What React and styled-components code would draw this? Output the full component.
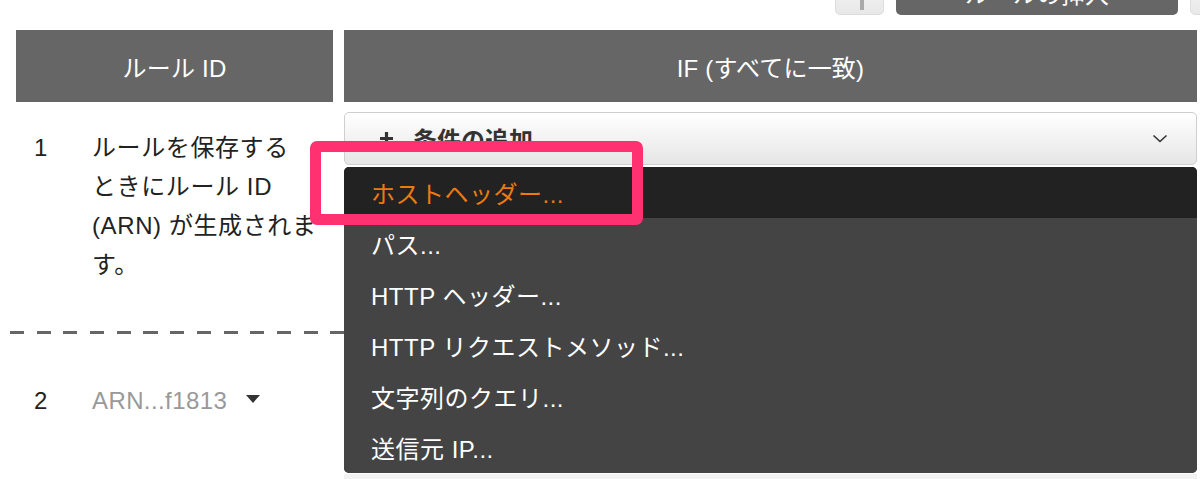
import React from 'react';
import styled, { createGlobalStyle } from 'styled-components';

const GlobalStyle = createGlobalStyle`
  html, body {
    margin: 0;
    padding: 0;
    background: #fff;
  }
  body {
    font-family: "Liberation Sans", "Noto Sans CJK JP", sans-serif;
    color: #222;
    overflow: hidden;
  }
`;

const conditions = [
  'ホストヘッダー...',
  'パス...',
  'HTTP ヘッダー...',
  'HTTP リクエストメソッド...',
  '文字列のクエリ...',
  '送信元 IP...',
];

const App = () => {
  return (
    <Page>
      <GlobalStyle />
      <Toolbar>
        <GhostButton>
          <Grip />
        </GhostButton>
        <PrimaryButton>ルールの挿入</PrimaryButton>
        <GhostButton edge />
      </Toolbar>

      <RulesTable>
        <HeaderCell>ルール ID</HeaderCell>
        <HeaderCell>IF (すべてに一致)</HeaderCell>

        <IdCell first>
          <RuleNum>1</RuleNum>
          <IdText>
            ルールを保存する
            <br />
            ときにルール ID
            <br />
            (ARN) が生成されま
            <br />
            す。
          </IdText>
        </IdCell>
        <CondCell first>
          <DropdownWrap>
            <AddButton>
              <svg width="15" height="15" viewBox="0 0 15 15">
                <path d="M7.5 1v13M1 7.5h13" stroke="#333" strokeWidth="3.2" />
              </svg>
              <span>条件の追加</span>
              <Chevron width="16" height="9" viewBox="0 0 16 9">
                <path d="M1.5 1.5l6.5 6 6.5-6" fill="none" stroke="#333" strokeWidth="1.6" />
              </Chevron>
            </AddButton>
            <Menu>
              {conditions.map((label, i) => (
                <MenuItem key={label} active={i === 0}>
                  {label}
                </MenuItem>
              ))}
            </Menu>
            <Highlight />
          </DropdownWrap>
        </CondCell>

        <Divider />

        <IdCell>
          <RuleNum>2</RuleNum>
          <ArnLink>
            ARN...f1813
            <svg width="14" height="8" viewBox="0 0 14 8">
              <path d="M0 0h14L7 8z" fill="#333" />
            </svg>
          </ArnLink>
        </IdCell>
        <CondCell>
          <NextCondition />
        </CondCell>
      </RulesTable>
    </Page>
  );
};

const Page = styled.div`
  width: 1200px;
  height: 479px;
  overflow: hidden;
`;

const Toolbar = styled.div`
  height: 16px;
  overflow: hidden;
  display: flex;
  align-items: flex-end;
  gap: 12px;
  padding-left: 835px;
`;

const GhostButton = styled.div`
  flex: none;
  width: ${(p) => (p.edge ? '40px' : '49px')};
  height: 46px;
  box-sizing: border-box;
  border: 1px solid #ddd;
  border-radius: 5px;
  background: linear-gradient(#f9f9f9, #e8e8e8);
  display: flex;
  justify-content: center;
  margin-bottom: 1px;
`;

const Grip = styled.span`
  width: 4px;
  height: 40px;
  background: #aaa;
  margin-left: 4px;
`;

const PrimaryButton = styled.div`
  flex: none;
  width: 282px;
  height: 46px;
  border-radius: 5px;
  background: #666;
  color: #fff;
  font-size: 24px;
  display: flex;
  align-items: center;
  justify-content: center;
  margin-bottom: 1px;
`;

const RulesTable = styled.div`
  display: grid;
  grid-template-columns: 317px 853px;
  column-gap: 11px;
  margin-top: 14px;
  padding-left: 16px;
`;

const HeaderCell = styled.div`
  height: 72px;
  background: #666;
  color: #fff;
  font-size: 24px;
  letter-spacing: 0.2px;
  display: flex;
  align-items: center;
  justify-content: center;
`;

const IdCell = styled.div`
  display: flex;
  align-items: flex-start;
  padding-top: ${(p) => (p.first ? '26px' : '47px')};
  padding-bottom: ${(p) => (p.first ? '47px' : '0')};
  font-size: 24px;
  line-height: 39px;
`;

const RuleNum = styled.span`
  width: 76px;
  padding-left: 18px;
  box-sizing: border-box;
  color: #222;
`;

const IdText = styled.span`
  color: #222;
  letter-spacing: 0.6px;
  white-space: nowrap;
`;

const ArnLink = styled.span`
  color: #999;
  display: flex;
  align-items: center;
  gap: 19px;
  letter-spacing: 0.4px;
  svg {
    margin-top: -3px;
  }
`;

const CondCell = styled.div`
  padding-top: ${(p) => (p.first ? '10px' : '140px')};
`;

const DropdownWrap = styled.div`
  position: relative;
`;

const AddButton = styled.div`
  height: 53px;
  box-sizing: border-box;
  border: 1px solid #cfcfcf;
  border-radius: 5px;
  background: linear-gradient(#ffffff, #e6e6e6);
  display: flex;
  align-items: center;
  gap: 19px;
  padding-left: 34px;
  padding-right: 28px;
  font-size: 24px;
  font-weight: bold;
  color: #333;
  span {
    flex: 1;
  }
`;

const Chevron = styled.svg`
  flex: none;
`;

const Menu = styled.div`
  position: absolute;
  top: 55px;
  left: 0;
  right: 0;
  background: #444;
  border-radius: 5px;
  overflow: hidden;
  z-index: 2;
`;

const MenuItem = styled.div`
  height: 51px;
  display: flex;
  align-items: center;
  padding-left: 27px;
  font-size: 24px;
  letter-spacing: 0.5px;
  background: ${(p) => (p.active ? '#222' : '#444')};
  color: ${(p) => (p.active ? '#ec7a0e' : '#fff')};
`;

const Highlight = styled.div`
  position: absolute;
  left: -34px;
  top: 29px;
  width: 333px;
  height: 84px;
  box-sizing: border-box;
  border: 11px solid #ff3170;
  border-radius: 7px;
  z-index: 3;
`;

const Divider = styled.div`
  grid-column: 1 / -1;
  height: 3px;
  margin-left: -6px;
  background: repeating-linear-gradient(
    to right,
    #666 0 14px,
    transparent 14px 26.7px
  );
`;

const NextCondition = styled.div`
  height: 20px;
  background: #f2f2f2;
`;

export default App;
